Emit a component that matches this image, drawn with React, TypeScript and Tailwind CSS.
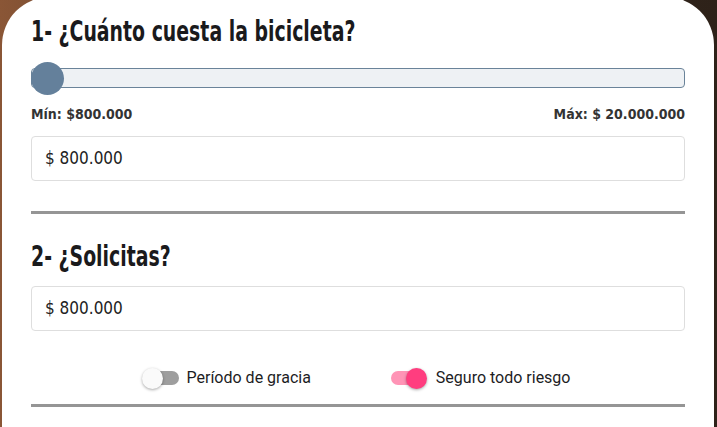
import React from "react";

const din = { fontFamily: '"DejaVu Sans Condensed", "DejaVu Sans", sans-serif' };
const roboto = { fontFamily: 'Roboto, "Noto Sans", sans-serif' };

function Toggle({ on }: { on: boolean }) {
  return (
    <div className="relative w-[33px] h-[21px] flex items-center">
      <div className={`w-[33px] h-[14px] rounded-full ${on ? "bg-[#ff94b6]" : "bg-[#9e9e9e]"}`} />
      <div
        className={`absolute top-0 w-[21px] h-[21px] rounded-full shadow-[0_1px_3px_rgba(0,0,0,0.35)] ${
          on ? "left-[15px] bg-[#ff3d7f]" : "left-[-4px] bg-[#fafafa]"
        }`}
      />
    </div>
  );
}

function Title({ children }: { children: React.ReactNode }) {
  return (
    <div className="h-[30px] whitespace-nowrap">
      <span
        className="inline-block origin-left scale-x-[0.75] text-[28px] leading-[30px] font-bold text-[#1a1a1c]"
        style={din}
      >
        {children}
      </span>
    </div>
  );
}

export default function App() {
  return (
    <div className="w-[717px] h-[427px] overflow-hidden bg-gradient-to-r from-[#8a5636] via-[#3b2a1f] to-[#2e2219]">
      <div className="mt-[-3px] ml-[2px] w-[712px] h-[440px] bg-white rounded-t-[48px] px-[29px] pt-[20px]">
        <Title>1- ¿Cuánto cuesta la bicicleta?</Title>
        <div className="relative mt-[21px] h-[20px]">
          <div className="h-[20px] rounded-[4px] border border-[#6a8399] bg-[#eef1f4]" />
          <div className="absolute left-0 top-[-6px] w-[33px] h-[33px] rounded-full bg-[#64809b]" />
        </div>
        <div className="mt-[17px] flex justify-between text-[14px] leading-[18px] font-bold text-[#333]" style={din}>
          <span>Mín: $800.000</span>
          <span>Máx: $ 20.000.000</span>
        </div>
        <div className="mt-[13px] h-[45px] rounded-[4px] border border-[#dedede] flex items-center px-[13px] text-[17px] text-[#222]" style={din}>
          $ 800.000
        </div>
        <div className="mt-[30px] h-[3px] bg-[#959595]" />
        <div className="mt-[28px]">
          <Title>2- ¿Solicitas?</Title>
        </div>
        <div className="mt-[14px] h-[45px] rounded-[4px] border border-[#dedede] flex items-center px-[13px] text-[17px] text-[#222]" style={din}>
          $ 800.000
        </div>
        <div className="mt-[35px] flex items-center justify-center text-[16px] text-[#1d1d1f]" style={roboto}>
          <div className="flex items-center gap-[8px]">
            <Toggle on={false} />
            <span>Período de gracia</span>
          </div>
          <div className="flex items-center gap-[12px] ml-[80px]">
            <Toggle on={true} />
            <span>Seguro todo riesgo</span>
          </div>
        </div>
        <div className="mt-[14px] h-[3px] bg-[#959595]" />
      </div>
    </div>
  );
}
